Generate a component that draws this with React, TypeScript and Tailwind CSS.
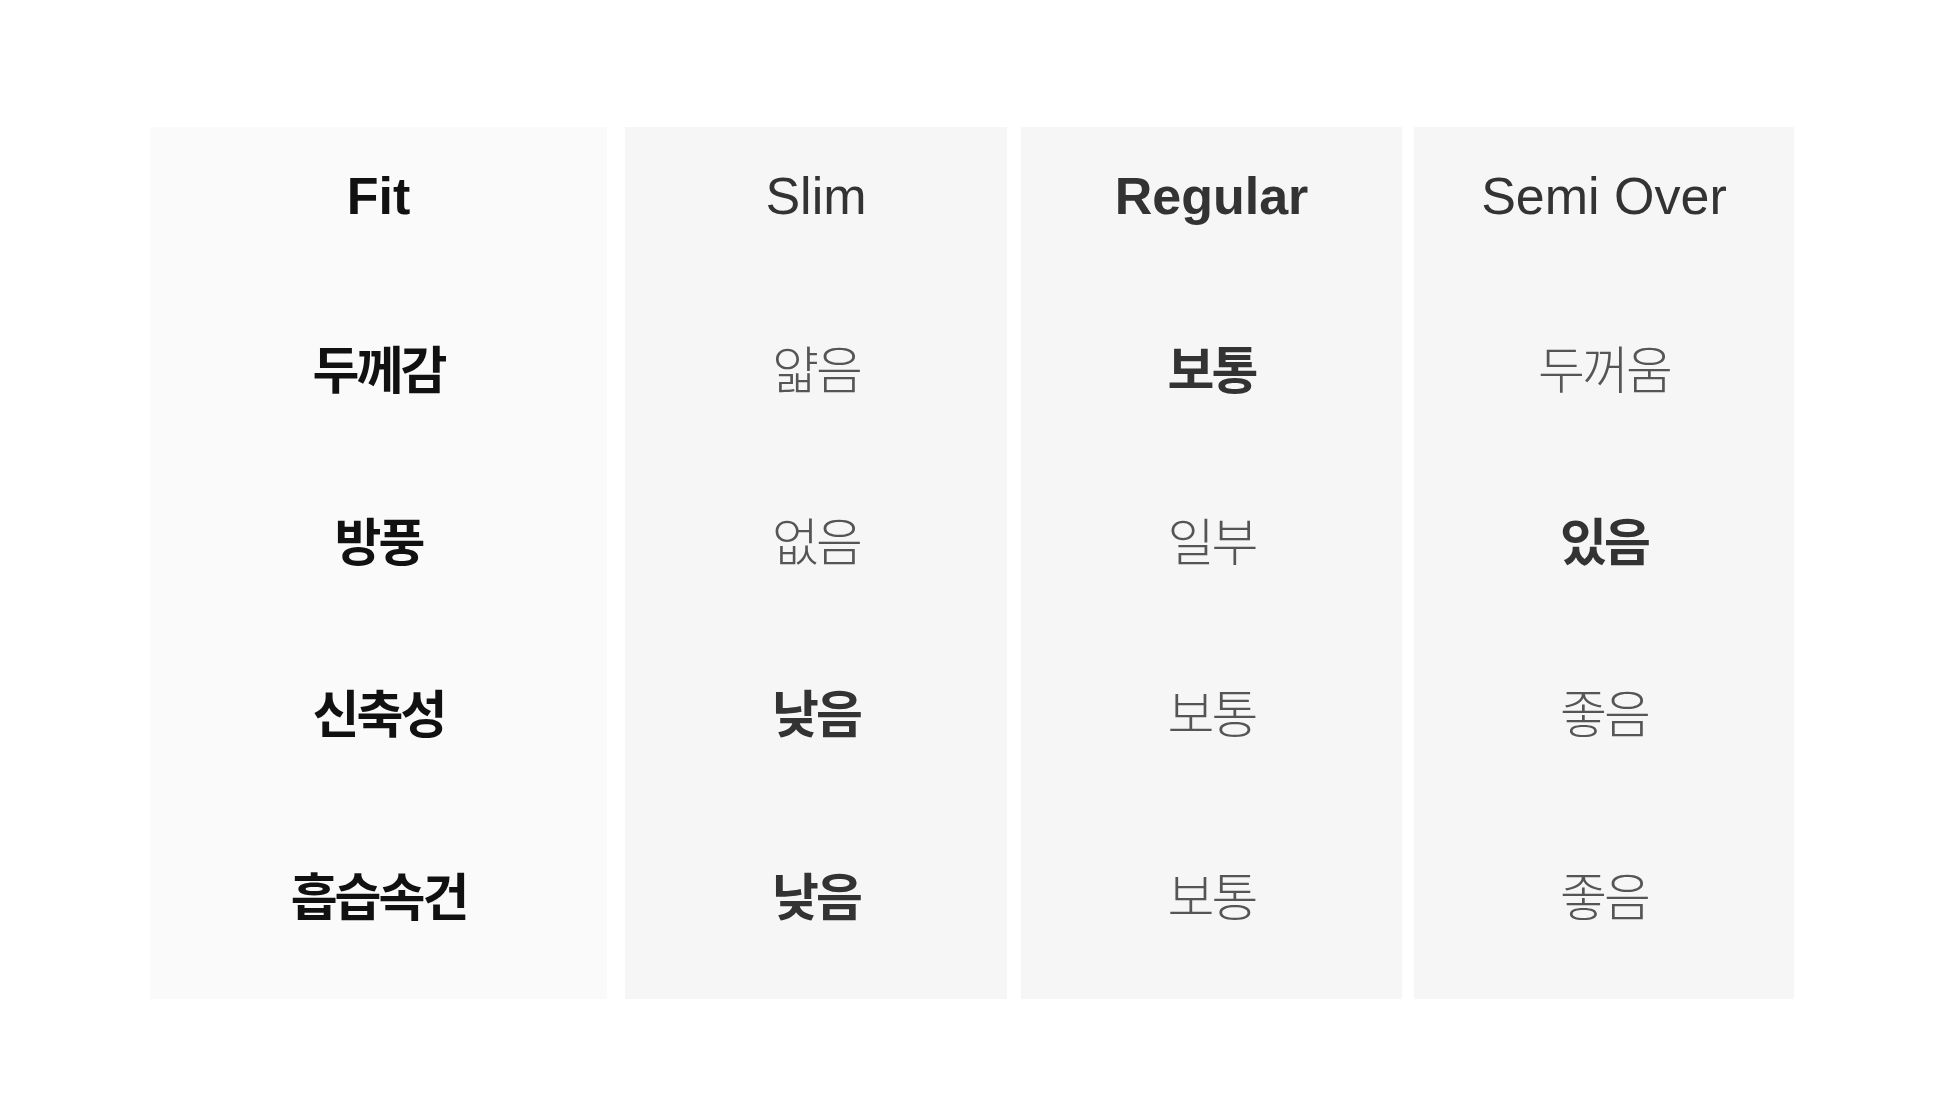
const kr = "font-['Noto_Sans_CJK_KR','Noto_Sans',sans-serif]";
const en = "font-['Liberation_Sans','Noto_Sans_CJK_KR',sans-serif]";

type Cell = { text: string; bold?: boolean };

const labels = ["두께감", "방풍", "신축성", "흡습속건"];

const columns: { title: string; titleBold?: boolean; values: Cell[] }[] = [
  {
    title: "Slim",
    values: [
      { text: "얇음" },
      { text: "없음" },
      { text: "낮음", bold: true },
      { text: "낮음", bold: true },
    ],
  },
  {
    title: "Regular",
    titleBold: true,
    values: [
      { text: "보통", bold: true },
      { text: "일부" },
      { text: "보통" },
      { text: "보통" },
    ],
  },
  {
    title: "Semi Over",
    values: [
      { text: "두꺼움" },
      { text: "있음", bold: true },
      { text: "좋음" },
      { text: "좋음" },
    ],
  },
];

// row heights: header, 3 middle rows, last row
const rowClass = [
  "h-[138px] mb-[16px]",
  "h-[172px]",
  "h-[172px]",
  "h-[172px]",
  "h-[194px]",
];

function Column({
  bg,
  className,
  children,
}: {
  bg: string;
  className: string;
  children: React.ReactNode;
}) {
  return <div className={`flex flex-col pb-[8px] ${bg} ${className}`}>{children}</div>;
}

export default function App() {
  return (
    <div className="w-[1946px] h-[1099px] bg-white pt-[127px] pl-[150px] flex items-start">
      <Column bg="bg-[#fafafa]" className="w-[457px]">
        <div className={`${rowClass[0]} flex items-center justify-center`}>
          <span className={`${en} text-[52px] leading-none font-bold text-[#111]`}>Fit</span>
        </div>
        {labels.map((l, i) => (
          <div key={l} className={`${rowClass[i + 1]} flex items-center justify-center`}>
            <span className={`${kr} text-[51px] leading-none font-bold tracking-[-3px] text-[#111]`}>
              {l}
            </span>
          </div>
        ))}
      </Column>

      {columns.map((col, ci) => (
        <Column
          key={col.title}
          bg="bg-[#f6f6f6]"
          className={ci === 0 ? "ml-[18px] w-[382px]" : ci === 1 ? "ml-[14px] w-[381px]" : "ml-[12px] w-[380px]"}
        >
          <div className={`${rowClass[0]} flex items-center justify-center`}>
            <span
              className={`${en} text-[52px] leading-none text-[#333] ${col.titleBold ? "font-bold" : "font-normal"}`}
            >
              {col.title}
            </span>
          </div>
          {col.values.map((v, i) => (
            <div key={i} className={`${rowClass[i + 1]} flex items-center justify-center`}>
              <span
                className={`${kr} text-[51px] leading-none tracking-[-3px] ${
                  v.bold ? "font-bold text-[#333]" : "font-light text-[#555]"
                }`}
              >
                {v.text}
              </span>
            </div>
          ))}
        </Column>
      ))}
    </div>
  );
}
